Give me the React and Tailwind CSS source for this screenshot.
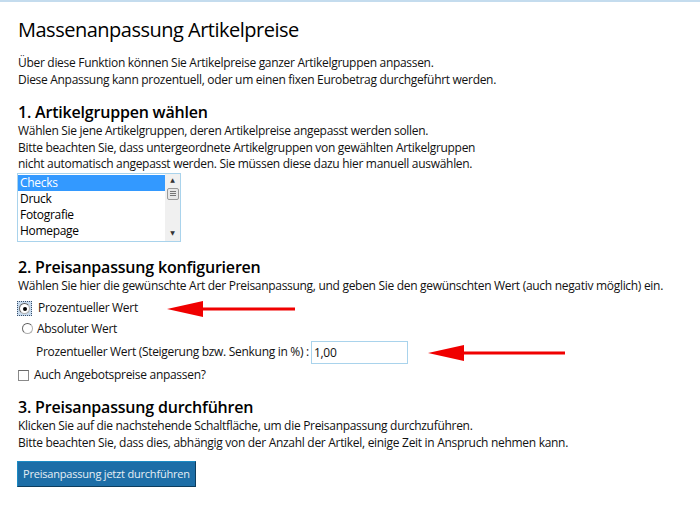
import { useState } from "react";

const GROUPS = ["Checks", "Druck", "Fotografie", "Homepage"];

// Rote Markierungspfeile aus dem Screenshot
const Arrow = ({ width }) => (
  <svg width={width} height="16" viewBox={`0 0 ${width} 16`} className="block">
    <polygon points="0,8 36,0 36,16" fill="#f00000" />
    <rect x="34" y="6.5" width={width - 34} height="3" fill="#f00000" />
  </svg>
);

const Radio = ({ checked, focused }) => (
  <span
    className={
      focused
        ? "inline-flex items-center justify-center w-[15px] h-[15px] border border-dotted border-[#3a4f6a] bg-[#c9dcef]"
        : "inline-flex items-center justify-center w-[15px] h-[15px]"
    }
  >
    <span className="w-[11px] h-[11px] rounded-full border border-[#b0b0b0] border-t-[#5a5a5a] border-l-[#6a6a6a] bg-white flex items-center justify-center">
      {checked && <span className="w-[4px] h-[4px] rounded-full bg-black" />}
    </span>
  </span>
);

export default function App() {
  const [selected, setSelected] = useState("Checks");
  const [mode, setMode] = useState("prozent");

  return (
    <div
      className="min-h-[507px] bg-white border-t-2 border-[#c4dcee] text-[12px] leading-[16.5px] tracking-[-0.3px] text-[#111]"
      style={{ fontFamily: '"Open Sans", "DejaVu Sans", sans-serif' }}
    >
      <div className="pl-[18px] pt-[16px]">
        <h1 className="text-[20px] leading-[24px] font-medium tracking-[-0.5px] text-black">
          Massenanpassung Artikelpreise
        </h1>

        <p className="mt-[12px] leading-[17px]">
          Über diese Funktion können Sie Artikelpreise ganzer Artikelgruppen anpassen.
          <br />
          Diese Anpassung kann prozentuell, oder um einen fixen Eurobetrag durchgeführt werden.
        </p>

        {/* 1. Artikelgruppen */}
        <h2 className="mt-[13px] text-[16px] leading-[22px] font-semibold tracking-[-0.2px] text-black">
          1. Artikelgruppen wählen
        </h2>
        <p>
          Wählen Sie jene Artikelgruppen, deren Artikelpreise angepasst werden sollen.
          <br />
          Bitte beachten Sie, dass untergeordnete Artikelgruppen von gewählten Artikelgruppen
          <br />
          nicht automatisch angepasst werden. Sie müssen diese dazu hier manuell auswählen.
        </p>
        <div className="ml-[-1px] w-[164px] h-[69px] border border-[#a9d3ec] flex bg-white">
          <div className="flex-1 pt-[1px]">
            {GROUPS.map((g) => (
              <div
                key={g}
                onClick={() => setSelected(g)}
                className={
                  selected === g
                    ? "h-[16px] leading-[16px] pl-[2px] bg-[#3399ff] text-white"
                    : "h-[16px] leading-[16px] pl-[2px] text-black"
                }
              >
                {g}
              </div>
            ))}
          </div>
          <div className="w-[15px] bg-[#f0f0f0] flex flex-col items-center">
            <span className="h-[14px] flex items-center justify-center text-[6px] text-[#333]">▲</span>
            <span className="w-[12px] h-[12px] border border-[#9a9a9a] rounded-[2px] bg-[#e8e8e8] flex flex-col items-center justify-center gap-[1px]">
              <span className="w-[6px] h-px bg-[#777]" />
              <span className="w-[6px] h-px bg-[#777]" />
              <span className="w-[6px] h-px bg-[#777]" />
            </span>
            <span className="flex-1" />
            <span className="h-[14px] flex items-center justify-center text-[6px] text-[#333]">▼</span>
          </div>
        </div>

        {/* 2. Konfiguration */}
        <h2 className="mt-[14px] text-[16px] leading-[22px] font-semibold tracking-[-0.2px] text-black">
          2. Preisanpassung konfigurieren
        </h2>
        <p>
          Wählen Sie hier die gewünschte Art der Preisanpassung, und geben Sie den gewünschten Wert (auch negativ möglich) ein.
        </p>
        <div className="mt-[6px] h-[17px] flex items-center">
          <label className="w-[150px] ml-[-1px] flex items-center cursor-pointer" onClick={() => setMode("prozent")}>
            <Radio checked={mode === "prozent"} focused />
            <span className="ml-[6px]">Prozentueller Wert</span>
          </label>
          <Arrow width={128} />
        </div>
        <label className="mt-[4px] h-[17px] flex items-center cursor-pointer" onClick={() => setMode("absolut")}>
          <span className="ml-[2px]">
            <Radio checked={mode === "absolut"} />
          </span>
          <span className="ml-[2px]">Absoluter Wert</span>
        </label>
        <div className="mt-[3px] flex items-center pl-[18px]">
          <span className="w-[275px]">Prozentueller Wert (Steigerung bzw. Senkung in %) :</span>
          <input
            defaultValue="1,00"
            className="w-[97px] h-[23px] border border-[#a9d3ec] px-[2px] text-[12px] tracking-[-0.3px] outline-none"
          />
          <span className="ml-[20px]">
            <Arrow width={137} />
          </span>
        </div>
        <label className="mt-[3px] h-[17px] flex items-center cursor-pointer">
          <span className="w-[11px] h-[11px] border border-[#8a8a8a] border-t-[#6a6a6a] bg-white" />
          <span className="ml-[5px]">Auch Angebotspreise anpassen?</span>
        </label>

        {/* 3. Durchführen */}
        <h2 className="mt-[12px] text-[16px] leading-[22px] font-semibold tracking-[-0.2px] text-black">
          3. Preisanpassung durchführen
        </h2>
        <p>
          Klicken Sie auf die nachstehende Schaltfläche, um die Preisanpassung durchzuführen.
          <br />
          Bitte beachten Sie, dass dies, abhängig von der Anzahl der Artikel, einige Zeit in Anspruch nehmen kann.
        </p>
        <button className="mt-[10px] ml-[-1px] h-[26px] px-[5px] bg-[#1d6ea7] border border-[#1b8bc4] border-b-[#0d3d5e] border-r-[#0d3d5e] text-[#e6eef5] text-[11px] tracking-[-0.2px]">
          Preisanpassung jetzt durchführen
        </button>
      </div>
    </div>
  );
}
